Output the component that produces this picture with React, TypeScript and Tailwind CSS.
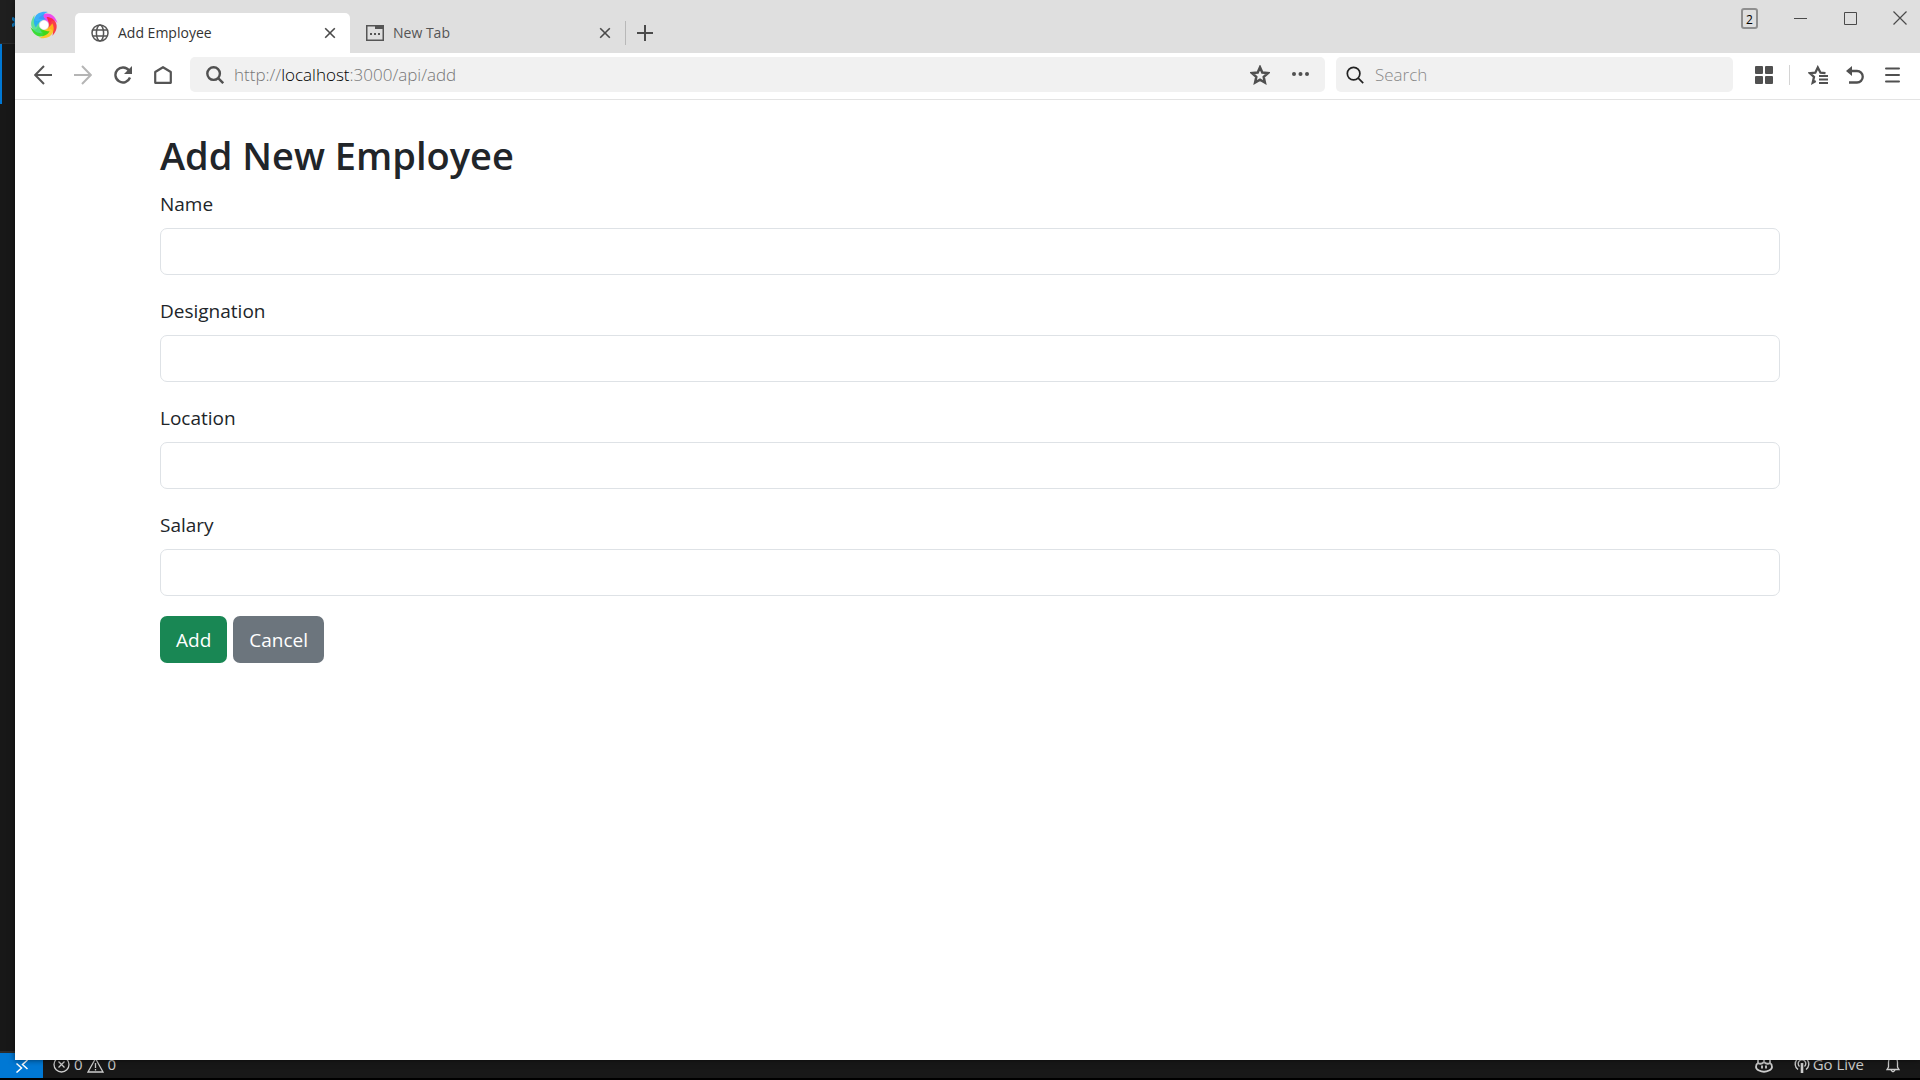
import React from "react";

const ui = "font-['Open_Sans','Noto_Sans',sans-serif]";

const arms = [
  { color: "#f032f0", turn: 20 },
  { color: "#ff1f2e", turn: 80 },
  { color: "#ffc40f", turn: 140 },
  { color: "#1fdc14", turn: 200 },
  { color: "#4fe08a", turn: 255 },
  { color: "#1fa8ff", turn: 315 },
];

function BrowserLogo() {
  return (
    <svg viewBox="0 0 30 30" className="h-[30px] w-[30px]" aria-hidden="true">
      <defs>
        <filter id="soft" x="-20%" y="-20%" width="140%" height="140%">
          <feGaussianBlur stdDeviation="0.7" />
        </filter>
      </defs>
      <g filter="url(#soft)">
        {arms.map((arm) => (
          <path
            key={arm.color}
            d="M7.500 11C9 3 19 -2 27 8.500C22 6 19.500 8 20.500 12.500C17 9.500 13 9.500 7.500 11Z"
            fill={arm.color}
            fillOpacity="0.85"
            transform={`rotate(${arm.turn} 15 15)`}
          />
        ))}
        <circle cx="15" cy="15" r="4.300" fill="#fff" />
      </g>
    </svg>
  );
}

function GlobeIcon() {
  return (
    <svg viewBox="0 0 18 18" className="h-[18px] w-[18px]" fill="none" stroke="#555" strokeWidth="1.5" aria-hidden="true">
      <circle cx="9" cy="9" r="8" />
      <ellipse cx="9" cy="9" rx="3.6" ry="8" />
      <path d="M2 6h14M2 12h14" />
    </svg>
  );
}

function NewTabIcon() {
  return (
    <svg viewBox="0 0 18 16" className="h-4 w-[18px]" aria-hidden="true">
      <rect x="0.75" y="0.75" width="16.5" height="14.5" fill="none" stroke="#555" strokeWidth="1.5" />
      <path d="M9 0h9v4H9z" fill="#555" />
      <path d="M4 8h2v2H4zM8 8h2v2H8zM12 8h2v2h-2z" fill="#555" />
    </svg>
  );
}

function CloseIcon() {
  return (
    <svg viewBox="0 0 12 12" className="h-3 w-3" stroke="#4a4a4a" strokeWidth="1.6" aria-hidden="true">
      <path d="M1.2 1.2l9.6 9.6M10.8 1.2l-9.6 9.6" />
    </svg>
  );
}

function Glass({ stroke, width }: { stroke: string; width: number }) {
  return (
    <svg viewBox="0 0 18 18" className="h-[18px] w-[18px] shrink-0" fill="none" stroke={stroke} strokeWidth={width} aria-hidden="true">
      <circle cx="7.6" cy="7.6" r="6.3" />
      <path d="M12.2 12.2l5 5" />
    </svg>
  );
}

function TabStrip() {
  return (
    <header className="flex h-[53px] bg-[#dfdfdf]">
      <div className="w-[60px] pt-[10px] pl-[14px]">
        <BrowserLogo />
      </div>
      <div className="flex flex-1 items-end">
        <div className="flex h-10 w-[275px] items-center rounded-t-[5px] bg-white pr-[14px] pl-4">
          <GlobeIcon />
          <span className="ml-[9px] flex-1 text-[14px] leading-5 text-[#333]">Add Employee</span>
          <button aria-label="Close Add Employee"><CloseIcon /></button>
        </div>
        <div className="flex h-10 w-[275px] items-center pr-[14px] pl-4">
          <NewTabIcon />
          <span className="ml-[9px] flex-1 text-[14px] leading-5 text-[#555]">New Tab</span>
          <button aria-label="Close New Tab"><CloseIcon /></button>
        </div>
        <div className="flex h-10 items-center">
          <span className="h-6 w-px bg-[#b8b8b8]" />
          <button aria-label="Open new tab" className="ml-[11px]">
            <svg viewBox="0 0 16 16" className="h-4 w-4" stroke="#4a4a4a" strokeWidth="2" aria-hidden="true">
              <path d="M8 0v16M0 8h16" />
            </svg>
          </button>
        </div>
      </div>
      <div className="flex h-9 items-center pr-[13px] text-[#4a4a4a]">
        <button className="mr-9 h-[21px] w-[17px] rounded-[3px] border-2 border-[#8f8f8f] text-center text-[12px] leading-5 text-black">2</button>
        <button aria-label="Minimize" className="mr-[37px]">
          <svg viewBox="0 0 13 14" className="h-[14px] w-[13px]" stroke="currentColor" strokeWidth="1" aria-hidden="true"><path d="M0 7.5h13" /></svg>
        </button>
        <button aria-label="Maximize" className="mr-[36px]">
          <svg viewBox="0 0 13 13" className="h-[13px] w-[13px]" fill="none" stroke="currentColor" aria-hidden="true"><path d="M.5 .5h12v12H.5z" /></svg>
        </button>
        <button aria-label="Close window">
          <svg viewBox="0 0 14 14" className="h-[14px] w-[14px]" stroke="currentColor" strokeWidth="1.2" aria-hidden="true"><path d="M.5 .5l13 13M13.5 .5l-13 13" /></svg>
        </button>
      </div>
    </header>
  );
}

function Toolbar() {
  return (
    <div className="flex h-[47px] items-start border-b border-[#e3e3e3] pt-1">
      <nav className="flex h-9 w-[175px] items-center gap-[22px] pl-[19px] text-[#555]">
        <button aria-label="Back">
          <svg viewBox="0 0 18 20" className="h-5 w-[18px]" fill="none" stroke="currentColor" strokeWidth="2" aria-hidden="true"><path d="M18 10H1.5M10 1L1.2 10l8.8 9" /></svg>
        </button>
        <button aria-label="Forward" className="text-[#b5b5b5]">
          <svg viewBox="0 0 18 20" className="h-5 w-[18px]" fill="none" stroke="currentColor" strokeWidth="2" aria-hidden="true"><path d="M0 10h16.500M8 1l8.800 9L8 19" /></svg>
        </button>
        <button aria-label="Reload">
          <svg viewBox="0 0 18 18" className="h-[18px] w-[18px]" fill="none" aria-hidden="true">
            <path d="M15 4.500A7.500 7.500 0 1 0 16 11.500" stroke="currentColor" strokeWidth="2.400" />
            <path d="M18 0v8h-8z" fill="currentColor" />
          </svg>
        </button>
        <button aria-label="Home">
          <svg viewBox="0 0 18 18" className="h-[18px] w-[18px]" fill="none" stroke="currentColor" strokeWidth="2.200" strokeLinejoin="round" aria-hidden="true"><path d="M1.200 6L9 1.200 16.800 6v10.800H1.200z" /></svg>
        </button>
      </nav>
      <div className="flex h-[35px] flex-1 items-center rounded-[5px] bg-[#f1f1f1] pr-4 pl-4">
        <Glass stroke="#505050" width={2.4} />
        <a href="#add" className="ml-[10px] flex-1 text-[17px] leading-6 font-light text-[#777]">
          http://<span className="text-black">localhost</span>:3000/api/add
        </a>
        <button aria-label="Bookmark this page">
          <svg viewBox="0 0 20 20" className="h-5 w-5" fill="none" stroke="#505050" strokeWidth="2.500" aria-hidden="true">
            <path d="M10 2.300l2.300 5.200 5.600.6-4.200 3.800 1.200 5.600-4.900-2.900-4.900 2.900 1.200-5.600L2.100 8.100l5.600-.6z" />
          </svg>
        </button>
        <button aria-label="Page actions" className="ml-[22px]">
          <svg viewBox="0 0 17 5" className="h-[5px] w-[17px]" fill="#505050" aria-hidden="true"><circle cx="2" cy="2" r="2" /><circle cx="8.500" cy="2" r="2" /><circle cx="15" cy="2" r="2" /></svg>
        </button>
      </div>
      <label className="ml-[11px] flex h-[35px] w-[397px] items-center rounded-[5px] bg-[#f1f1f1] pl-[10px]">
        <Glass stroke="#222" width={1.7} />
        <input aria-label="Search" placeholder="Search" className="ml-[11px] min-w-0 flex-1 bg-transparent text-[17px] leading-6 font-light outline-none placeholder:text-[#888]" />
      </label>
      <div className="flex h-9 w-[187px] items-center pl-[22px] text-[#505050]">
        <button aria-label="Apps">
          <svg viewBox="0 0 18 18" className="h-[18px] w-[18px]" fill="currentColor" aria-hidden="true"><rect width="8" height="8" rx="1" /><rect x="10" width="8" height="8" rx="1" /><rect y="10" width="8" height="8" rx="1" /><rect x="10" y="10" width="8" height="8" rx="1" /></svg>
        </button>
        <span className="ml-4 h-5 w-px bg-[#d4d4d4]" />
        <button aria-label="Favorites" className="ml-[18px]">
          <svg viewBox="0 0 20 20" className="h-5 w-5" fill="none" stroke="currentColor" strokeWidth="2.300" aria-hidden="true">
            <path d="M17.500 8.200l-5-.5L9.800 2.500 7.300 7.700l-5.500.5 4.200 3.800-1.300 5.700 3-1.700" />
            <path d="M11 11h9M11 14.500h9M11 18h9" strokeWidth="2" />
          </svg>
        </button>
        <button aria-label="Reopen closed tab" className="ml-[18px]">
          <svg viewBox="0 0 18 18" className="h-[18px] w-[18px]" fill="none" aria-hidden="true">
            <path d="M4 5h7a5.700 5.700 0 0 1 0 11.500H3" stroke="currentColor" strokeWidth="2.300" />
            <path d="M0 5L6 0v10z" fill="currentColor" />
          </svg>
        </button>
        <button aria-label="Menu" className="ml-[21px]">
          <svg viewBox="0 0 15 16" className="h-4 w-[15px]" stroke="currentColor" strokeWidth="2" strokeLinecap="round" aria-hidden="true"><path d="M1 1.500h13M1 8h13M1 14.500h13" /></svg>
        </button>
      </div>
    </div>
  );
}

const fields = ["Name", "Designation", "Location", "Salary"];

function EmployeeForm() {
  return (
    <main className="flex-1 overflow-hidden bg-white pt-[30px] pl-[5px] text-[#212529]">
      <form className="mx-auto w-full max-w-[1620px]">
        <h2 className="mb-2 text-[38px] leading-[50px] font-semibold">Add New Employee</h2>
        {fields.map((name) => (
          <div key={name} className="mb-5">
            <label htmlFor={name} className="mb-2 block text-[19px] leading-8">{name}</label>
            <input id={name} className="block h-[47px] w-full rounded-[7px] border border-[#dee2e6] px-4 text-[19px]" />
          </div>
        ))}
        <div className="flex gap-[6px] text-[19px] text-white">
          <button type="button" className="h-[47px] rounded-[7px] bg-[#198754] px-4 pt-[2px]">Add</button>
          <button type="button" className="h-[47px] rounded-[7px] bg-[#6c757d] px-4 pt-[2px]">Cancel</button>
        </div>
      </form>
    </main>
  );
}

function EditorBackdrop() {
  return (
    <div className="flex h-screen flex-col bg-[#181818] text-[#ccc]">
      <div className="flex h-11 items-center border-b border-[#2b2b2b] bg-[#1f1f1f]">
        <svg viewBox="0 0 20 20" className="ml-3 h-5 w-5" fill="none" stroke="#0f7cc2" strokeWidth="3" aria-hidden="true"><path d="M0 6l15 12M0 14L15 2v16" /></svg>
      </div>
      <div className="flex-1"><div className="h-[60px] w-[2px] bg-[#0078d4]" /></div>
      <footer className="flex h-[27px] items-center border-t-2 border-[#2b2b2b] text-[15px]">
        <button aria-label="Remote" className="flex h-full w-[43px] items-center justify-center bg-[#0078d4]">
          <svg viewBox="0 0 14 14" className="h-[14px] w-[14px]" fill="none" stroke="#fff" strokeWidth="1.500" aria-hidden="true"><path d="M1.500 4.500l5 4.500-5 4.500M12.500 1L7.500 5.500l5 4.500" /></svg>
        </button>
        <span className="ml-[10px] flex items-center gap-1 pb-[2px]">
          <svg viewBox="0 0 17 17" className="h-[17px] w-[17px]" fill="none" stroke="currentColor" strokeWidth="1.300" aria-hidden="true"><circle cx="8.500" cy="8.500" r="7.500" /><path d="M5.500 5.500l6 6M11.500 5.500l-6 6" /></svg>
          0
          <svg viewBox="0 0 17 16" className="h-4 w-[17px]" fill="none" stroke="currentColor" strokeWidth="1.300" aria-hidden="true"><path d="M8.500 1.500l7.500 13.500H1zM8.500 6v5M8.500 12v1.500" /></svg>
          0
        </span>
        <span className="ml-auto flex items-center pr-5 pb-[2px]">
          <svg viewBox="0 0 18 17" className="h-[17px] w-[18px]" fill="none" stroke="currentColor" strokeWidth="1.800" aria-hidden="true"><path d="M3 7V3.500Q3 2 5.500 2T9 4q1-2 3.500-2T15 3.500V7M3 7q3 2 6-1 3 3 6 1M3 7Q1 8 1 11q0 2 3 3.500 5 2.500 10 0 3-1.500 3-3.500 0-3-2-4M7 9.500v3M11 9.500v3" /></svg>
          <svg viewBox="0 0 16 17" className="ml-[21px] h-[17px] w-4" fill="none" stroke="currentColor" strokeWidth="1.400" aria-hidden="true"><path d="M4 13.500a6.800 6.800 0 1 1 8 0M5.500 10.500a3.800 3.800 0 1 1 5 0" /><path d="M8 7v10" strokeWidth="2.600" /></svg>
          <span className="ml-[3px]">Go Live</span>
          <svg viewBox="0 0 14 17" className="ml-[22px] h-[17px] w-[14px]" fill="none" stroke="currentColor" strokeWidth="1.300" aria-hidden="true"><path d="M1 13.500h12L11.500 11V6a4.500 4.500 0 0 0-9 0v5zM5 14q2 3.500 4 0" /></svg>
        </span>
      </footer>
      <div className="h-[2px] bg-black" />
    </div>
  );
}

export default function App() {
  return (
    <div className={`relative h-screen overflow-hidden ${ui}`}>
      <EditorBackdrop />
      <div className="absolute top-0 right-0 bottom-5 left-[15px] flex flex-col bg-white shadow-[0_0_6px_rgba(0,0,0,0.6)]">
        <TabStrip />
        <Toolbar />
        <EmployeeForm />
      </div>
    </div>
  );
}
